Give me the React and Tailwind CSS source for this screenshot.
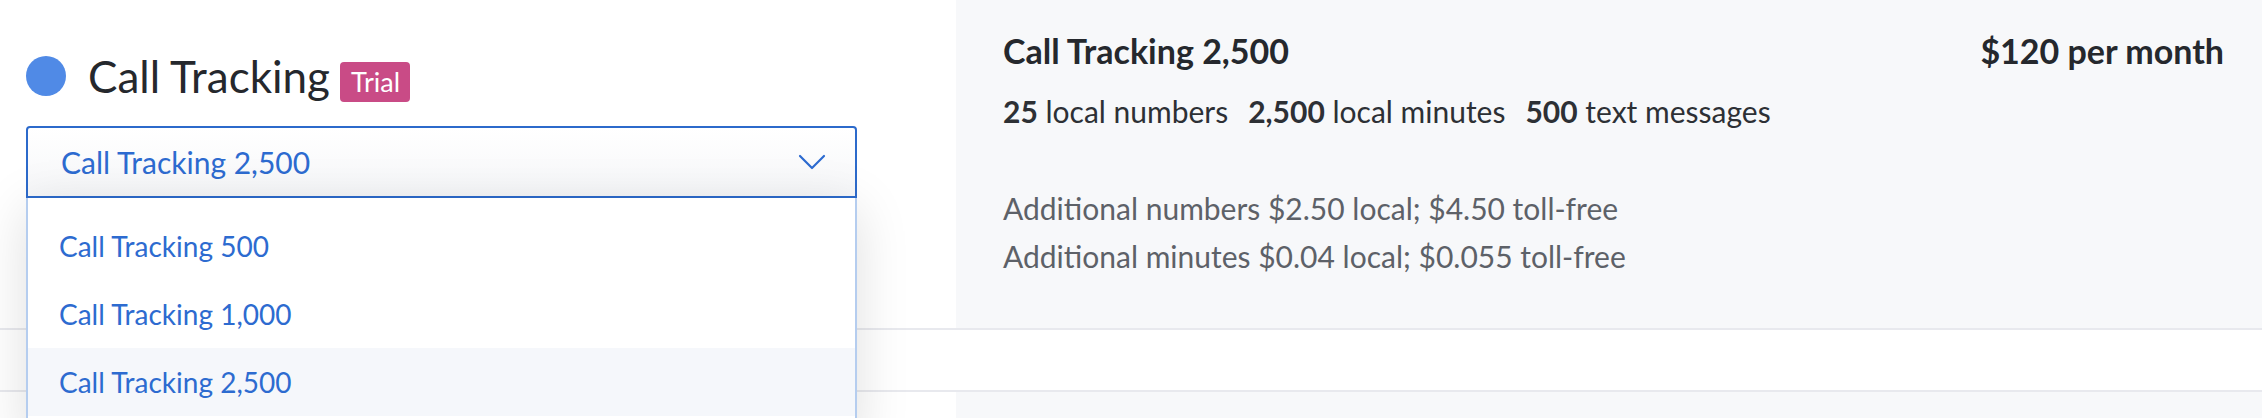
import { ChevronDown } from "lucide-react";

const plans = ["Call Tracking 500", "Call Tracking 1,000", "Call Tracking 2,500"];

export default function App() {
  return (
    <div className="w-[2262px] h-[418px] overflow-hidden bg-white font-['Lato',sans-serif] text-[#2d3035]">
      {/* plan row */}
      <div className="flex h-[330px] border-b-2 border-[#e8e9ee]">
        <div className="relative w-[956px] pl-[26px] pt-[56px]">
          <div className="flex items-start">
            <span className="h-[40px] w-[40px] rounded-full bg-[#508ae6]" />
            <h2 className="ml-[22px] text-[44px] leading-[40px] text-[#25282d]">Call Tracking</h2>
            <span className="ml-[10px] mt-[6px] rounded-[4px] bg-[#c94b86] pl-[11px] pr-[10px] text-[27px] leading-[40px] text-white">
              Trial
            </span>
          </div>

          <div className="mt-[24px] flex h-[72px] w-[831px] items-center justify-between rounded-t-[4px] border-2 border-[#2c6acb] bg-gradient-to-b from-white to-[#f6f7f9] pl-[33px] pr-[19px]">
            <span className="text-[30px] text-[#2d6bd0]">Call Tracking 2,500</span>
            <ChevronDown className="h-[48px] w-[48px] text-[#2d6bd0]" strokeWidth={1.1} />
          </div>

          {/* open list */}
          <ul className="absolute left-[26px] top-[198px] z-10 h-[240px] w-[831px] border-x-2 border-[#b5cdef] bg-white pt-[14px] shadow-[0_10px_50px_rgba(0,0,0,0.13)]">
            {plans.map((p, i) => (
              <li
                key={p}
                className={`flex h-[68px] items-center pl-[31px] text-[28px] text-[#2d6bd0] ${i === 2 ? "bg-[#f5f7fb]" : ""}`}
              >
                {p}
              </li>
            ))}
          </ul>
        </div>

        <div className="flex flex-1 justify-between bg-[#f7f8fa] pl-[47px] pr-[38px] pt-[31px]">
          <div>
            <h3 className="text-[34px] font-bold leading-[40px] text-[#25282d]">Call Tracking 2,500</h3>
            <p className="mt-[20px] text-[30px] leading-[40px]">
              <b>25</b> local numbers<span className="ml-[20px]" />
              <b>2,500</b> local minutes<span className="ml-[20px]" />
              <b>500</b> text messages
            </p>
            <div className="mt-[53px] text-[30px] leading-[48px] text-[#5d6168]">
              <p>Additional numbers $2.50 local; $4.50 toll-free</p>
              <p>Additional minutes $0.04 local; $0.055 toll-free</p>
            </div>
          </div>
          <div className="text-[34px] font-bold leading-[40px] text-[#25282d]">$120 per month</div>
        </div>
      </div>

      <div className="h-[62px] border-b-2 border-[#e8e9ee] bg-white" />

      <div className="flex h-[26px]">
        <div className="w-[956px] bg-white" />
        <div className="flex-1 bg-[#f7f8fa]" />
      </div>
    </div>
  );
}
